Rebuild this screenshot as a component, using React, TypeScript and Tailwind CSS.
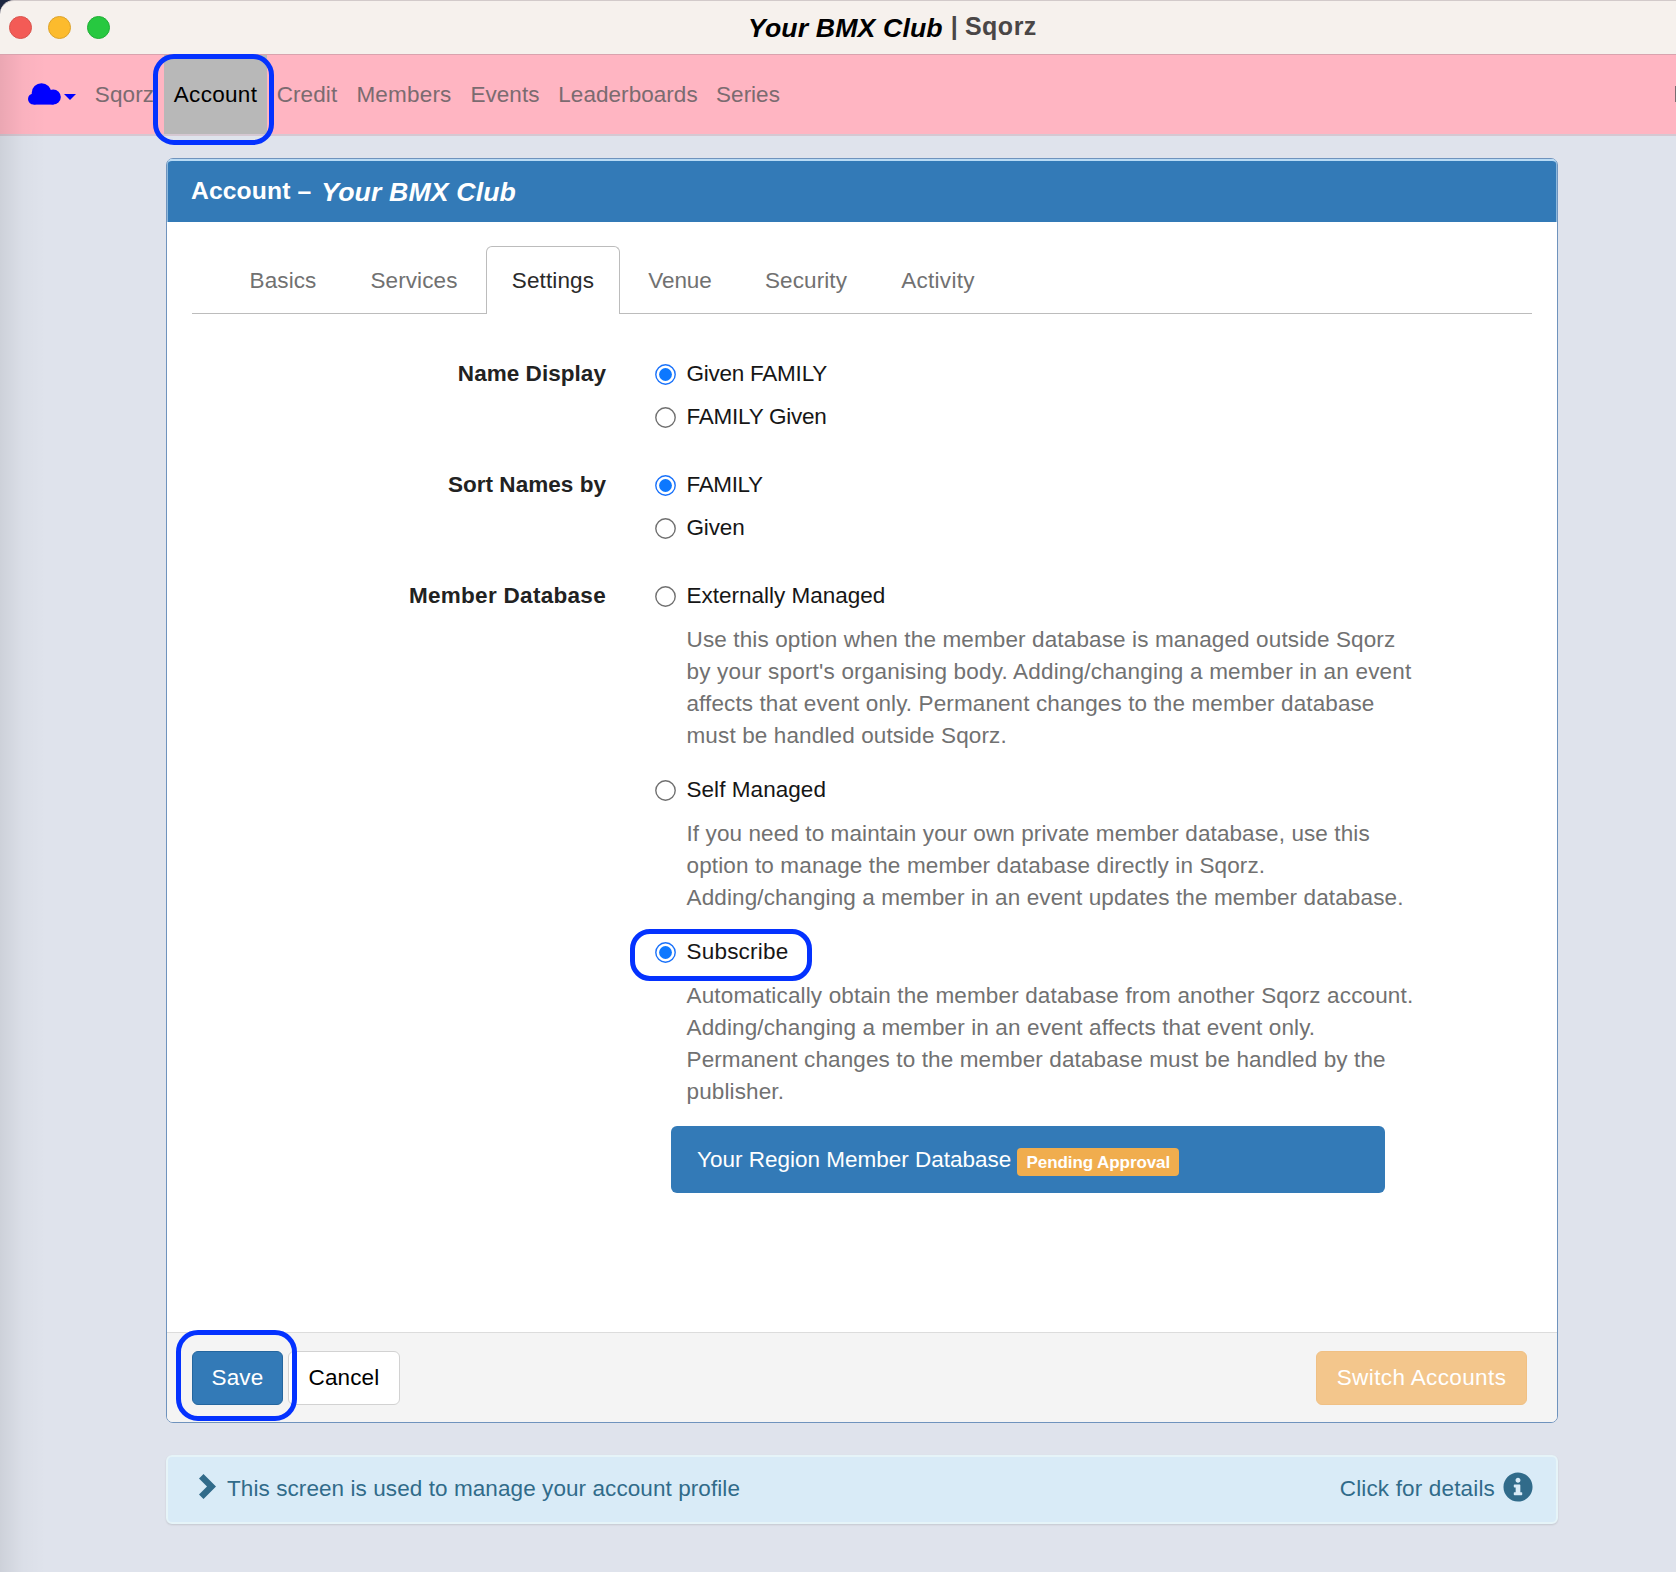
import React from "react";

const navItems = [
  { label: "Sqorz", cls: "w-[79px] text-[#7b6b70]" },
  { label: "Account", cls: "w-[103px] bg-[#b8b8b8] text-black tracking-[0.3px]" },
  { label: "Credit", cls: "w-[80px] text-[#7b6b70]" },
  { label: "Members", cls: "w-[114px] text-[#7b6b70] tracking-[0.2px]" },
  { label: "Events", cls: "w-[88px] text-[#7b6b70] tracking-[0px]" },
  { label: "Leaderboards", cls: "w-[158px] text-[#7b6b70] tracking-[0.05px]" },
  { label: "Series", cls: "w-[82px] text-[#7b6b70] tracking-[0px]" },
];

const tabs = [
  { label: "Basics", cls: "w-[116px]" },
  { label: "Services", cls: "ml-[5px] w-[136px]" },
  { label: "Settings", cls: "ml-[4px] w-[134px]", active: true },
  { label: "Venue", cls: "ml-[4px] w-[112px] tracking-[-0.1px]" },
  { label: "Security", cls: "ml-[4px] w-[132px]" },
  { label: "Activity", cls: "ml-[4px] w-[124px] tracking-[0.3px]" },
];

function Radio({ checked = false }: { checked?: boolean }) {
  const tone = checked ? "text-[#1a72fa]" : "text-[#707070]";
  return (
    <svg className={"mt-[1px] " + tone} width="21" height="21" viewBox="0 0 21 21">
      <circle cx="10.5" cy="10.5" r="9.700" fill="#fff" stroke="currentColor" strokeWidth="1.4" />
      {checked && <circle cx="10.5" cy="10.5" r="6.400" fill="#0d78ff" />}
    </svg>
  );
}

function Option({
  label,
  checked,
  ringed,
  tracking = "",
}: {
  label: string;
  checked?: boolean;
  ringed?: boolean;
  tracking?: string;
}) {
  return (
    <div className="relative flex h-8 items-center gap-[11px] text-[#161616]">
      <Radio checked={checked} />
      <span className={"whitespace-nowrap " + tracking}>{label}</span>
      {ringed && (
        <span className="absolute -left-[24.5px] -top-[7px] h-[52px] w-[182px] rounded-[20px] border-[5px] border-[#0432ff]" />
      )}
    </div>
  );
}

function Help({ lines }: { lines: [string, string][] }) {
  return (
    <div className="ml-[32px] mt-[12px] text-[#717171]">
      {lines.map(([text, tracking]) => (
        <div key={text} className={"h-[32.15px] whitespace-nowrap leading-[32px] " + tracking}>
          {text}
        </div>
      ))}
    </div>
  );
}

function Group({
  label,
  className,
  tracking,
  children,
}: {
  label: string;
  className: string;
  tracking: string;
  children: React.ReactNode;
}) {
  return (
    <div className={"flex gap-[48.5px] " + className}>
      <div className={"w-[414px] whitespace-nowrap text-right font-bold leading-8 text-[#222] " + tracking}>{label}</div>
      <div>{children}</div>
    </div>
  );
}

export default function App() {
  return (
    <div className="relative h-[1572px] w-[1676px] overflow-hidden bg-[#dfe3ec] font-['Liberation_Sans',Arial,sans-serif] text-[22.5px] leading-8 tracking-[0.12px]">
      {/* title bar */}
      <div className="bg-[#1d2740]">
        <header className="relative flex h-[55px] rounded-tl-[14px] border-b border-t border-b-[#d9a3ae] border-t-[#d2caca] bg-[#f6f1ed]">
          <div className="ml-[9px] mt-[15px] flex gap-[16px]">
            <span className="size-[23px] rounded-full border border-[#d9544d] bg-[#f35b56]" />
            <span className="size-[23px] rounded-full border border-[#dca32b] bg-[#fcbb2d]" />
            <span className="size-[23px] rounded-full border border-[#1fae35] bg-[#27c840]" />
          </div>
          <div className="ml-[638px] flex whitespace-nowrap">
            <span className="mt-[11px] text-[26.7px] font-bold italic text-black">Your BMX Club</span>
            <span className="ml-[8px] mt-[9px] text-[25px] font-bold text-[#4a4646]">|</span>
            <span className="ml-[7px] mt-[9px] text-[25px] font-bold tracking-[0.5px] text-[#4a4646]">Sqorz</span>
          </div>
        </header>
      </div>

      {/* navigation */}
      <nav className="relative flex h-[81px] border-b-2 border-[#d5c8d2] bg-[#ffb5c2]">
        <div className="flex w-[85px] pl-[28px] pt-[28px]">
          <svg width="33" height="22" viewBox="0 0 33 22" fill="#0000ff">
            <circle cx="13.5" cy="10" r="9.8" />
            <circle cx="5.6" cy="16" r="5.6" />
            <circle cx="25.2" cy="14" r="7.6" />
            <rect x="5.600" y="12" width="20" height="9.600" />
          </svg>
          <svg className="ml-[3px] mt-[11px]" width="12" height="6" viewBox="0 0 12 6" fill="#0000ff">
            <path d="M0 0H12L6 6Z" />
          </svg>
        </div>
        {navItems.map((n) => (
          <div key={n.label} className={"flex h-[79px] justify-center whitespace-nowrap pt-[24px] " + n.cls}>
            {n.label}
          </div>
        ))}
        <span className="ml-auto mt-[31px] h-4 w-px bg-[#7b6b70]" />
        <span className="absolute -top-[1px] left-[153px] h-[91px] w-[121px] rounded-[21px] border-[5px] border-[#0432ff]" />
      </nav>

      {/* account panel */}
      <main className="ml-[166px] mt-[22px] w-[1392px]">
        <section className="flex h-[1265px] flex-col rounded-[7px] border border-[#6f93bd] bg-white">
          <div className="flex h-[63px] rounded-t-[5px] border border-b-0 border-t-2 border-t-[#b9dbf5] border-x-[#8db9dd] bg-[#337ab7] pl-[23px] text-white">
            <span className="mt-[14px] text-[24.7px] font-bold tracking-[0.1px]">Account –</span>
            <span className="ml-[10px] mt-[15px] text-[26.7px] font-bold italic">Your BMX Club</span>
          </div>

          <div className="ml-[25px] mr-[25px] mt-[24px] flex h-[68px] border-b border-[#bcbcbc] pl-[33px]">
            {tabs.map((t) => (
              <div
                key={t.label}
                className={
                  t.cls +
                  " flex h-[68px] justify-center whitespace-nowrap " +
                  (t.active
                    ? "rounded-t-[6px] border border-b-0 border-[#bcbcbc] bg-white pt-[18px] text-[#2a2a2a]"
                    : "pt-[19px] text-[#717171]")
                }
              >
                {t.label}
              </div>
            ))}
          </div>

          <div className="ml-[25px]">
            <Group label="Name Display" tracking="tracking-[0.05px]" className="mt-[44px]">
              <Option label="Given FAMILY" tracking="tracking-[-0.24px]" checked />
              <div className="h-[11px]" />
              <Option label="FAMILY Given" tracking="tracking-[-0.24px]" />
            </Group>
            <Group label="Sort Names by" tracking="tracking-[0.04px]" className="mt-[36px]">
              <Option label="FAMILY" tracking="tracking-[-0.35px]" checked />
              <div className="h-[11px]" />
              <Option label="Given" tracking="tracking-[-0.15px]" />
            </Group>
            <Group label="Member Database" tracking="tracking-[0.3px]" className="mt-[36px]">
              <Option label="Externally Managed" tracking="tracking-[0px]" />
              <Help
                lines={[
                  ["Use this option when the member database is managed outside Sqorz", "tracking-[0.13px]"],
                  ["by your sport's organising body. Adding/changing a member in an event", "tracking-[0.19px]"],
                  ["affects that event only. Permanent changes to the member database", "tracking-[0.11px]"],
                  ["must be handled outside Sqorz.", "tracking-[0.13px]"],
                ]}
              />
              <div className="h-[21.5px]" />
              <Option label="Self Managed" tracking="tracking-[0.05px]" />
              <Help
                lines={[
                  ["If you need to maintain your own private member database, use this", "tracking-[0.1px]"],
                  ["option to manage the member database directly in Sqorz.", "tracking-[0.13px]"],
                  ["Adding/changing a member in an event updates the member database.", "tracking-[0.12px]"],
                ]}
              />
              <div className="h-[21.5px]" />
              <Option label="Subscribe" tracking="tracking-[0.2px]" checked ringed />
              <Help
                lines={[
                  ["Automatically obtain the member database from another Sqorz account.", "tracking-[0.15px]"],
                  ["Adding/changing a member in an event affects that event only.", "tracking-[0.13px]"],
                  ["Permanent changes to the member database must be handled by the", "tracking-[0.12px]"],
                  ["publisher.", "tracking-[0.12px]"],
                ]}
              />
              <div className="ml-[16.5px] mt-[17px] flex h-[67px] w-[714px] items-center rounded-[6px] bg-[#337ab7] pl-[26px] text-white">
                <span className="whitespace-nowrap pt-[2px] tracking-[0px]">Your Region Member Database</span>
                <span className="ml-[6px] mt-[5px] flex h-[28px] w-[162px] items-center justify-center whitespace-nowrap rounded-[4px] bg-[#f0ad4e] pt-[2px] text-[17px] font-bold tracking-[-0.08px]">
                  Pending Approval
                </span>
              </div>
            </Group>
          </div>

          <footer className="relative mt-auto flex h-[90px] rounded-b-[6px] border-t border-[#dcdcdc] bg-[#f4f4f4] pl-[25px] pt-[18px]">
            <button className="h-[54px] w-[91px] rounded-[6px] border border-[#24669f] bg-[#337ab7] text-white">Save</button>
            <button className="ml-[5px] h-[54px] w-[112px] rounded-[6px] border border-[#d2d2d2] bg-white text-black">
              Cancel
            </button>
            <button className="ml-auto mr-[30px] h-[54px] w-[211px] whitespace-nowrap rounded-[6px] border border-[#f0c084] bg-[#f3c68c] tracking-[0.38px] text-white">
              Switch Accounts
            </button>
            <span className="absolute -top-[3px] left-[9px] h-[91px] w-[121px] rounded-[22px] border-[5px] border-[#0432ff]" />
          </footer>
        </section>

        <section className="mt-[32px] flex h-[69px] items-center rounded-[6px] border-2 border-[#e6f4f8] bg-[#d9ebf7] pb-[2px] pl-[31px] pr-[23px] text-[#316b8a] shadow-[0_1px_2px_rgba(0,0,0,0.12)]">
          <svg width="17" height="25" viewBox="0 0 17 25" fill="#316b8a" className="-mt-[4px]">
            <path d="M4.5 0L17 12.5L4.5 25L0 20.5L8 12.5L0 4.5Z" />
          </svg>
          <span className="ml-[11px] whitespace-nowrap tracking-[0.08px]">This screen is used to manage your account profile</span>
          <span className="ml-auto whitespace-nowrap tracking-[0.16px]">Click for details</span>
          <svg className="-mt-[4px] ml-[8px]" width="30" height="30" viewBox="0 0 512 512" fill="#316b8a">
            <path d="M256 8C119 8 8 119.1 8 256s111 248 248 248 248-111 248-248S393 8 256 8zm0 92c23.200 0 42 18.800 42 42s-18.800 42-42 42-42-18.800-42-42 18.800-42 42-42zm72 284c0 6.600-5.400 12-12 12h-120c-6.600 0-12-5.400-12-12v-28c0-6.600 5.400-12 12-12h20v-80h-20c-6.600 0-12-5.400-12-12v-28c0-6.600 5.400-12 12-12h88c6.600 0 12 5.400 12 12v120h20c6.600 0 12 5.400 12 12v28z" />
          </svg>
        </section>
      </main>

      {/* shading along the window's left edge */}
      <div className="pointer-events-none absolute left-0 top-[55px] h-[1517px] w-[46px] bg-gradient-to-r from-black/8 via-black/2 to-transparent" />
    </div>
  );
}
